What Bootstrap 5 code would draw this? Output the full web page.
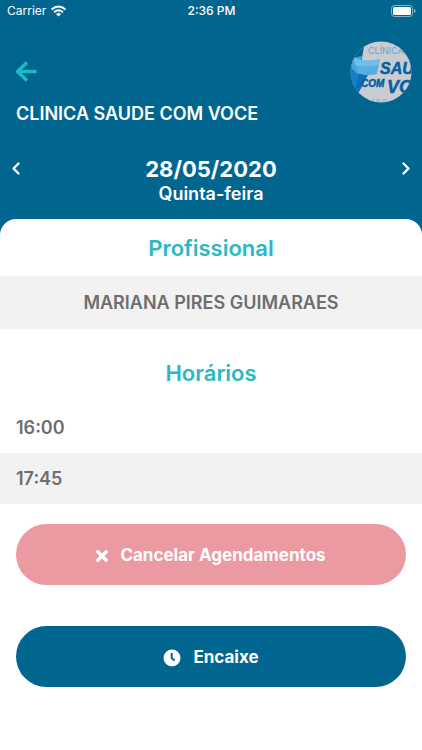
<!DOCTYPE html>
<html lang="pt-BR">
<head>
<meta charset="utf-8">
<meta name="viewport" content="width=device-width, initial-scale=1">
<title>Clinica Saude Com Voce</title>
<link href="https://cdn.jsdelivr.net/npm/bootstrap@5.3.0/dist/css/bootstrap.min.css" rel="stylesheet">
<style>
  :root { --petrol: #00668f; --aqua: #2ab8c4; --stripe: #f2f2f2; --ink: #6e6e6e; }
  body { font-family: Inter, "Liberation Sans", sans-serif; font-weight: 600; color: var(--ink); background: #fff; }
  svg { display: block; }
  .top-area { background: var(--petrol); padding-bottom: 30px; }
  .status-bar { display: grid; grid-template-columns: 1fr auto 1fr; height: 22px; padding: 0 6px 0 7px; font-size: 12px; line-height: 22px; font-weight: 400; }
  .status-time { font-weight: 500; }
  .app-bar { padding: 19px 10px 0 15px; }
  .clinic-name { font-size: 18px; line-height: 22px; font-weight: 600; }
  .day-nav { padding: 30px 10px 0; }
  .day-date { font-size: 22px; line-height: 28px; font-weight: 700; }
  .day-name { font-size: 18px; line-height: 22px; }
  .plain-btn { border: 0; background: none; padding: 0; color: inherit; }
  .sheet { margin-top: -16px; border-radius: 16px 16px 0 0; background: #fff; padding-top: 16px; }
  .section-title { font-size: 22px; line-height: 26px; font-weight: 600; color: var(--aqua); margin: 0; text-align: center; }
  .stripe { background: var(--stripe); }
  .pro-row { font-size: 18px; line-height: 21px; padding: 16px; margin-top: 15px; }
  .times { padding-top: 31px; }
  .slot { font-size: 18px; line-height: 21px; padding: 15px 16px; }
  .actions { padding-top: 20px; row-gap: 41px; }
  .action { height: 61px; gap: 12px; font-size: 17px; font-weight: 700; padding-top: 8px; }
  .action-cancel, .action-cancel:hover { background: #ec9aa2; color: #fff; }
  .action-fit, .action-fit:hover { background: var(--petrol); color: #fff; }
</style>
</head>
<body>
<header class="top-area text-white">
  <div class="status-bar">
    <div class="d-flex align-items-center gap-1">
      <span>Carrier</span>
      <svg width="17" height="12" viewBox="0 0 17 12" aria-hidden="true"><g fill="none" stroke="#fff" stroke-width="2"><path d="M1.500 4.500Q8.500-1.500 15.500 4.500"/><path d="M4 7.200Q8.500 3.400 13 7.200"/></g><path fill="#fff" d="M8.500 11.500 6 9Q8.500 7 11 9Z"/></svg>
    </div>
    <span class="status-time">2:36 PM</span>
    <div class="d-flex align-items-center justify-content-end">
      <svg width="25" height="12" viewBox="0 0 25 12" aria-hidden="true"><rect x=".5" y=".5" width="21" height="11" rx="3" fill="none" stroke="#fff" stroke-opacity=".5"/><rect x="2" y="2" width="18" height="8" rx="1.500" fill="#fff"/><path d="M23 4v4q1.500-.5 1.500-2T23 4" fill="#fff" fill-opacity=".6"/></svg>
    </div>
  </div>
  <div class="app-bar d-flex justify-content-between align-items-center">
    <button class="plain-btn" type="button" aria-label="Voltar">
      <svg width="22" height="22" viewBox="0 0 22 22" fill="none" stroke="#1bbac8" stroke-width="3.400" stroke-linejoin="round"><path d="M3 10.500H21.500"/><path d="M12 1.500 2.500 10.500l9.500 9"/></svg>
    </button>
    <svg width="62" height="62" viewBox="0 0 62 62" role="img" aria-label="Clínica Saúde com Você">
      <defs><clipPath id="disc"><circle cx="31" cy="31" r="30.500"/></clipPath></defs>
      <g clip-path="url(#disc)" font-family="Liberation Sans, sans-serif">
        <rect width="62" height="62" fill="#c9cdd2"/>
        <path d="M0 0H15L12 17 9 34 7 53 10 62H0Z" fill="#00668f"/>
        <path d="M2 17 12 15 10 25 9 35 1 27Z" fill="#48a5d9"/>
        <path d="M1 27 9 34 7 53 1 48Z" fill="#1680c4"/>
        <path d="M9 32 18 34 8 53 5 48Z" fill="#0b70b5"/>
        <path d="M4 17Q17 22 30 18L27 33Q17 36 8 32Z" fill="#55afe1"/>
        <path d="M4 17Q17 22 30 18L29 24Q18 27 5 24Z" fill="#73bee9"/>
        <text x="18" y="13" font-size="9" font-family="Inter, sans-serif" font-weight="400" fill="#64a5d0">CLÍNICA</text>
        <g font-weight="700" font-style="italic" fill="#075f9e" stroke="#075f9e" stroke-width=".5">
          <text x="30" y="33" font-size="16">SAU</text>
          <text x="11" y="46" font-size="10">COM</text>
          <text x="37" y="52" font-size="18">VO</text>
        </g>
        <text x="21" y="62" font-size="6" font-weight="400" fill="#64a5d0">A E O</text>
      </g>
    </svg>
  </div>
  <h1 class="clinic-name px-3 mb-0">CLINICA SAUDE COM VOCE</h1>
  <div class="day-nav d-flex justify-content-between align-items-start">
    <button class="plain-btn pt-1" type="button" aria-label="Dia anterior"><svg width="12" height="18" viewBox="0 0 12 18" fill="none" stroke="#fff" stroke-width="2.400" stroke-linecap="round" stroke-linejoin="round"><path d="M8.500 4.500 3.500 9.500 8.500 14.500"/></svg></button>
    <div class="text-center">
      <div class="day-date">28/05/2020</div>
      <div class="day-name">Quinta-feira</div>
    </div>
    <button class="plain-btn pt-1" type="button" aria-label="Próximo dia"><svg width="12" height="18" viewBox="0 0 12 18" fill="none" stroke="#fff" stroke-width="2.400" stroke-linecap="round" stroke-linejoin="round"><path d="M3.500 4.500 8.500 9.500 3.500 14.500"/></svg></button>
  </div>
</header>
<main class="sheet position-relative">
  <section>
    <h2 class="section-title">Profissional</h2>
    <div class="pro-row stripe text-center">MARIANA PIRES GUIMARAES</div>
  </section>
  <section class="times">
    <h2 class="section-title">Horários</h2>
    <ul class="list-unstyled mt-3 mb-0">
      <li class="slot">16:00</li>
      <li class="slot stripe">17:45</li>
    </ul>
  </section>
  <div class="actions d-grid px-3 pb-4">
    <button class="btn rounded-pill action action-cancel d-flex align-items-center justify-content-center" type="button">
      <svg width="12" height="12" viewBox="0 0 12 12" stroke="#fff" stroke-width="3.400" stroke-linecap="round" aria-hidden="true"><path d="m1.800 1.800 8.400 8.400m0-8.400-8.400 8.400"/></svg>
      Cancelar Agendamentos
    </button>
    <button class="btn rounded-pill action action-fit d-flex align-items-center justify-content-center" type="button">
      <svg width="18" height="18" viewBox="0 0 18 18" aria-hidden="true"><circle cx="9" cy="9" r="8.500" fill="#fff"/><path d="M8.700 4v5.200l3 2.300" fill="none" stroke="#00668f" stroke-width="2"/></svg>
      Encaixe
    </button>
  </div>
</main>
<script src="https://cdn.jsdelivr.net/npm/bootstrap@5.3.0/dist/js/bootstrap.bundle.min.js"></script>
</body>
</html>
